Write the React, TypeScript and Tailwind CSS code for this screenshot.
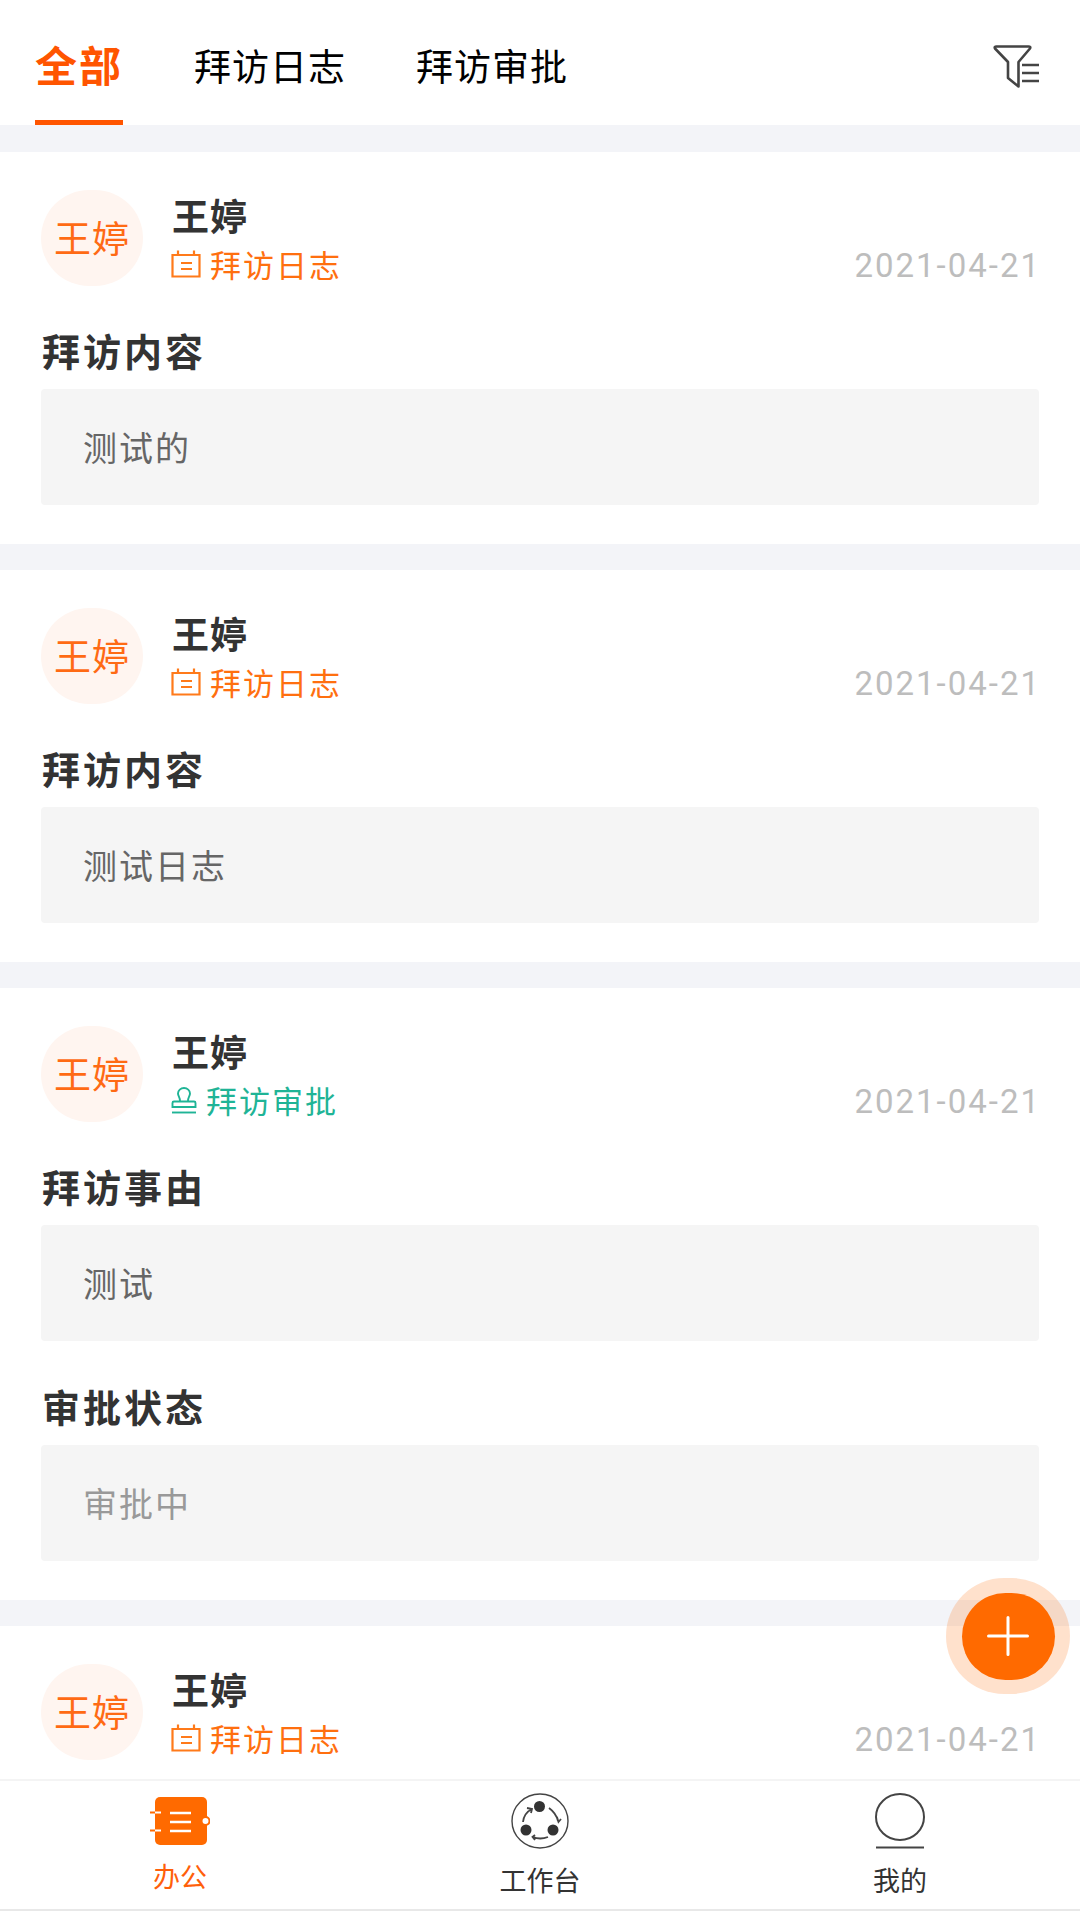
type Block = { label: string; text: string; muted?: boolean }

type Visit = {
  kind: 'log' | 'approval'
  blocks: Block[]
  height: string
}

const visits: Visit[] = [
  { kind: 'log', height: 'h-[392px]', blocks: [{ label: '拜访内容', text: '测试的' }] },
  { kind: 'log', height: 'h-[392px]', blocks: [{ label: '拜访内容', text: '测试日志' }] },
  {
    kind: 'approval',
    height: 'h-[612px]',
    blocks: [
      { label: '拜访事由', text: '测试' },
      { label: '审批状态', text: '审批中', muted: true },
    ],
  },
  { kind: 'log', height: 'h-[154px]', blocks: [] },
]

function FilterIcon() {
  return (
    <svg width="48" height="44" viewBox="0 0 48 44" fill="none" stroke="#444" strokeWidth="2.6">
      <path d="M2 3.5 Q1 1.5 3.5 1.5 H35.5 Q38 1.5 37 3.5 L25.5 17 V41.5 L15 33 V17 Z" strokeLinejoin="round" />
      <path d="M29 20 H46 M29 28 H46 M29 36 H46" />
    </svg>
  )
}

function CalendarIcon() {
  return (
    <svg width="30" height="28" viewBox="0 0 30 28" fill="none" stroke="#ff7a1a" strokeWidth="2.2">
      <path d="M7 0.5 V5 M23 0.5 V5 M1.5 5 H28.5 V26.5 H1.5 Z" />
      <path d="M10 13 H21 M10 19 H21" />
    </svg>
  )
}

function StampIcon() {
  return (
    <svg width="26" height="27" viewBox="0 0 26 27" fill="none" stroke="#1fb496" strokeWidth="1.9">
      <path d="M9 14 C9 10 7 9 7 6.5 A6 5.5 0 0 1 19 6.5 C19 9 17 10 17 14" />
      <path d="M1.5 20 V16 Q1.5 14.5 3 14.5 H23 Q24.5 14.5 24.5 16 V20 Z" />
      <path d="M1 25.5 H25" />
    </svg>
  )
}

function OfficeIcon() {
  return (
    <svg width="60" height="48" viewBox="0 0 60 48">
      <rect x="5" y="0" width="52" height="48" rx="5" fill="#ff6a00" />
      <path d="M0 15.5 H11 M0 33.5 H11" stroke="#ff6a00" strokeWidth="2" />
      <path d="M5 15.5 H11 M5 33.5 H11" stroke="#fff" strokeWidth="2" />
      <path d="M20 16 H41 M20 25 H41 M20 34 H41" stroke="#fff" strokeWidth="2.4" />
      <circle cx="55.5" cy="24" r="4" fill="#fff" stroke="#ff6a00" strokeWidth="2" />
    </svg>
  )
}

function WorkbenchIcon() {
  return (
    <svg width="58" height="56" viewBox="0 0 58 56" fill="none" stroke="#444">
      <ellipse cx="29" cy="28" rx="28" ry="27" strokeWidth="1.4" />
      <circle cx="28.5" cy="13.5" r="5.5" fill="#333" stroke="none" />
      <circle cx="15" cy="37" r="5.5" fill="#333" stroke="none" />
      <circle cx="42" cy="37" r="5.5" fill="#333" stroke="none" />
      <path d="M38 15 Q45 20 47 28 M46 24 L47.5 29 L50 26" strokeWidth="1.8" />
      <path d="M37 44 Q29 47 22 44 M24 42 L21.5 44 L24 47" strokeWidth="1.8" />
      <path d="M12 29 Q13 20 21 16 M16 15 L21 16 L20 20" strokeWidth="1.8" />
    </svg>
  )
}

function MineIcon() {
  return (
    <svg width="50" height="56" viewBox="0 0 50 56" fill="none" stroke="#444">
      <ellipse cx="25" cy="24" rx="24" ry="23" strokeWidth="2" />
      <path d="M1 54.5 H49" strokeWidth="2" />
    </svg>
  )
}

function VisitCard({ visit }: { visit: Visit }) {
  const isLog = visit.kind === 'log'
  return (
    <div className={`bg-white shrink-0 px-[41px] pt-[38px] ${visit.height}`}>
      <div className="flex h-[96px]">
        <div className="w-[102px] h-[96px] rounded-full bg-[#fff5f0] flex items-center justify-center text-[37px] tracking-[1px] text-[#ff6a14]">
          王婷
        </div>
        <div className="ml-[29px] flex-1">
          <div className="h-[49px] text-[37px] leading-[50px] tracking-[1px] font-semibold text-[#333]">王婷</div>
          <div className="flex items-center justify-between h-[50px]">
            {isLog ? (
              <div className="flex items-center text-[31px] tracking-[2px] text-[#ff6f0f] -ml-[1px]">
                <CalendarIcon />
                <span className="ml-[9px]">拜访日志</span>
              </div>
            ) : (
              <div className="flex items-center text-[31px] tracking-[2px] text-[#1fb496] -ml-[1px]">
                <StampIcon />
                <span className="ml-[9px]">拜访审批</span>
              </div>
            )}
            <div className="pt-[3px] text-[33px] tracking-[2px] -mr-[2px] text-[#bdbdbd] font-['Roboto',sans-serif]">2021-04-21</div>
          </div>
        </div>
      </div>
      {visit.blocks.map((b, i) => (
        <div key={i} className={i > 0 ? 'mt-[41px]' : 'mt-[40px]'}>
          <div className="text-[38px] leading-[48px] tracking-[3px] font-bold text-[#333] ml-[1px]">{b.label}</div>
          <div
            className={`mt-[15px] h-[116px] rounded-[4px] bg-[#f5f5f5] flex items-center pl-[42px] pb-[2px] text-[34px] tracking-[2px] ${
              b.muted ? 'text-[#999]' : 'text-[#666]'
            }`}
          >
            {b.text}
          </div>
        </div>
      ))}
    </div>
  )
}

export default function App() {
  return (
    <div className="relative w-[1080px] h-[1920px] overflow-hidden bg-white flex flex-col font-['Noto_Sans_CJK_SC','Noto_Sans',sans-serif]">
      <div className="h-[125px] shrink-0 flex items-start pl-[35px] pr-[39px] bg-white">
        <div className="h-[125px] w-[88px] border-b-[5px] border-[#ff5500] flex justify-center pt-[36px] text-[42px] leading-[56px] font-semibold tracking-[2px] text-[#ff5500]">
          全部
        </div>
        <div className="ml-[71px] pt-[40px] text-[37px] leading-[50px] tracking-[1px] text-black">拜访日志</div>
        <div className="ml-[70px] pt-[40px] text-[37px] leading-[50px] tracking-[1px] text-black">拜访审批</div>
        <div className="ml-auto mt-[45px]">
          <FilterIcon />
        </div>
      </div>

      <div className="flex-1 min-h-0 overflow-hidden bg-[#f3f4f8] flex flex-col gap-[26px] pt-[27px]">
        {visits.map((v, i) => (
          <VisitCard key={i} visit={v} />
        ))}
      </div>

      <div className="h-[132px] shrink-0 grid grid-cols-3 bg-white border-t-[2px] border-b-[2px] border-t-[#f4f4f4] border-b-[#e8e8e8]">
        <div className="flex flex-col items-center pt-[16px]">
          <OfficeIcon />
          <div className="mt-[13px] text-[27px] leading-[36px] text-[#ff5f0a]">办公</div>
        </div>
        <div className="flex flex-col items-center pt-[12px]">
          <WorkbenchIcon />
          <div className="mt-[13px] text-[27px] leading-[36px] text-[#333]">工作台</div>
        </div>
        <div className="flex flex-col items-center pt-[12px]">
          <MineIcon />
          <div className="mt-[13px] text-[27px] leading-[36px] text-[#333]">我的</div>
        </div>
      </div>
      <div className="h-[9px] shrink-0 bg-white" />

      <div className="absolute left-[946px] top-[1578px] w-[124px] h-[116px] rounded-full bg-[#ff6a00]/20 flex items-center justify-center">
        <div className="w-[93px] h-[87px] rounded-full bg-[#ff6a00] flex items-center justify-center">
          <svg width="42" height="40" viewBox="0 0 42 40" stroke="#fff" strokeWidth="3" strokeLinecap="round">
            <path d="M1.5 20 H40.5 M21 1.5 V38.5" />
          </svg>
        </div>
      </div>
    </div>
  )
}
